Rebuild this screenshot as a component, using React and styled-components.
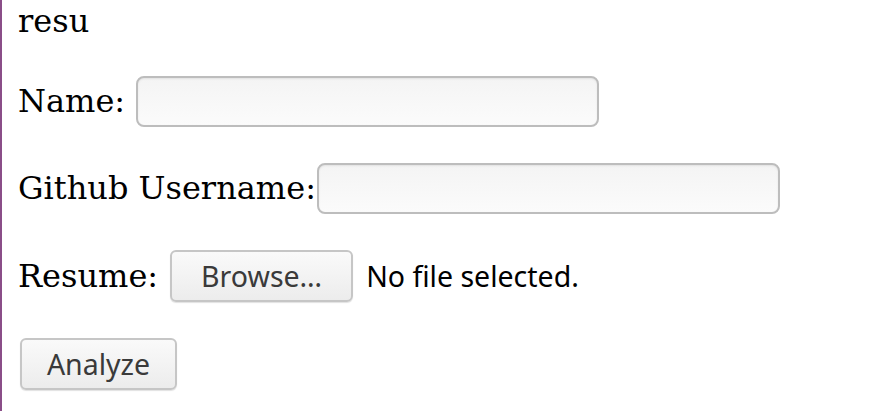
import React from 'react';
import styled, {createGlobalStyle} from 'styled-components';

const GlobalStyle = createGlobalStyle`
  html, body {
    margin: 0;
    padding: 0;
    background: #ffffff;
  }
  body {
    font-family: "DejaVu Serif", serif;
    font-size: 32px;
    color: #000000;
  }
`;

const Page = styled.div`
  min-height: 100vh;
  box-sizing: border-box;
  border-left: 2px solid #8a4e88;
  padding: 3px 0 0 16px;
`;

const Title = styled.div`
  line-height: 37px;
`;

const Form = styled.form`
  display: flex;
  flex-direction: column;
  align-items: flex-start;
  gap: 36px;
  margin-top: 36px;
`;

const Row = styled.div`
  display: flex;
  align-items: center;
  gap: ${(p) => p.$gap || 12}px;
  line-height: 37px;
`;

const Label = styled.label`
  white-space: nowrap;
`;

const TextInput = styled.input`
  box-sizing: border-box;
  width: 463px;
  height: 51px;
  margin: 0;
  border: 2px solid #bdbdbd;
  border-radius: 8px;
  background: linear-gradient(#f4f4f4, #fbfbfb);
  box-shadow: inset 0 1px 2px rgba(0, 0, 0, 0.08);
  font: inherit;
  outline: none;
`;

const Button = styled.button`
  box-sizing: border-box;
  height: 52px;
  width: ${(p) => p.$width}px;
  margin: 0 0 0 ${(p) => p.$offset || 0}px;
  padding: 0;
  border: 2px solid #c6c6c6;
  border-radius: 6px;
  background: linear-gradient(#fafafa, #ececec);
  box-shadow: 0 1px 1px rgba(0, 0, 0, 0.12);
  font-family: "Noto Sans", "Open Sans", sans-serif;
  font-size: 28.5px;
  color: #3a3a3a;
  cursor: pointer;
`;

const FileName = styled.span`
  font-family: "Noto Sans", "Open Sans", sans-serif;
  font-size: 28.5px;
  color: #000000;
  margin-left: 1px;
`;

export default function App() {
  return (
    <>
      <GlobalStyle />
      <Page>
        <Title>resu</Title>
        <Form onSubmit={(e) => e.preventDefault()}>
          <Row $gap={11}>
            <Label htmlFor="name">Name:</Label>
            <TextInput id="name" type="text" />
          </Row>
          <Row $gap={1}>
            <Label htmlFor="github">Github Username:</Label>
            <TextInput id="github" type="text" />
          </Row>
          <Row $gap={12}>
            <Label>Resume:</Label>
            <Button type="button" $width={183}>Browse…</Button>
            <FileName>No file selected.</FileName>
          </Row>
          <Button type="submit" $width={157} $offset={2}>Analyze</Button>
        </Form>
      </Page>
    </>
  );
}
